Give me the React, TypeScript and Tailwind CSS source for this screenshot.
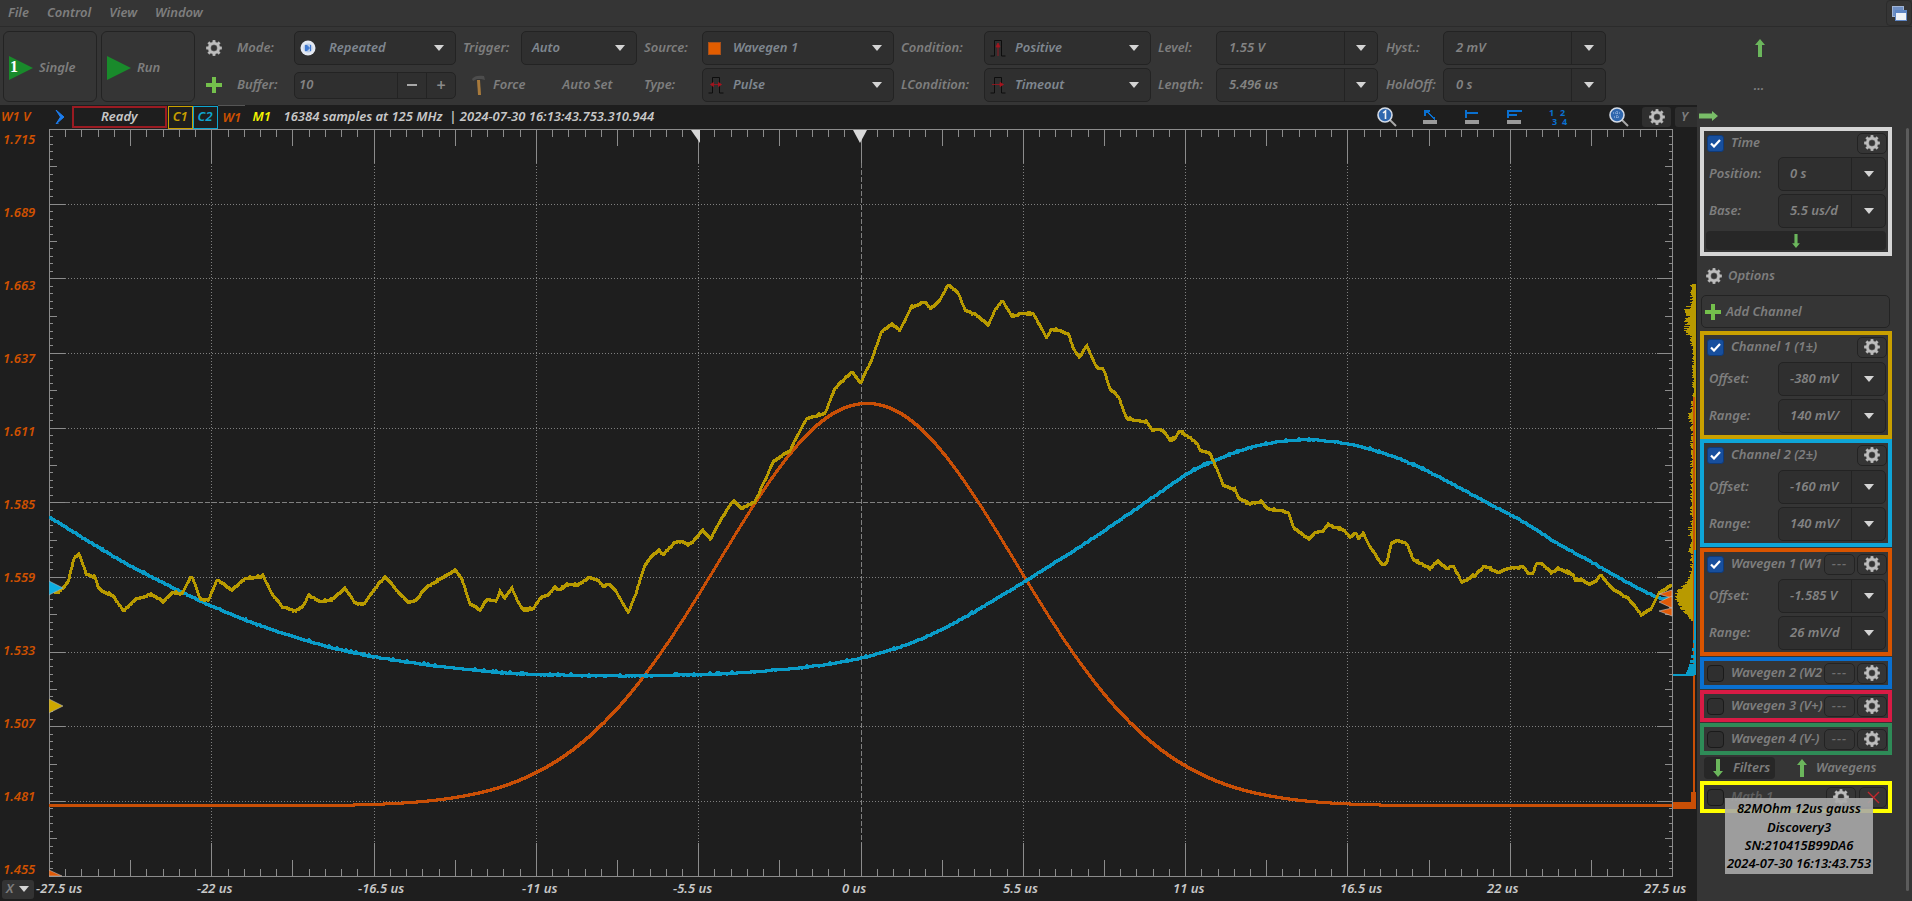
import React from "react";

const rnd = (i: number) => {
  const s = Math.sin(i * 12.9898) * 43758.5453;
  return s - Math.floor(s);
};

type Pt = [number, number];
const zoomed = (ox: number, oy: number, pts: number[][]): Pt[] =>
  pts.map(([x, y]) => [ox + x / 3, oy + y / 3] as Pt);

const yellowPts: Pt[] = [
  ...zoomed(0, 520, [[146, 210], [175, 218], [195, 198], [205, 185], [222, 115], [238, 103], [258, 160], [285, 172], [297, 207], [340, 228], [370, 272], [410, 235], [455, 222], [490, 245], [520, 215], [545, 222], [575, 167], [600, 235], [625, 240], [652, 178], [695, 210], [735, 175], [790, 168], [815, 220], [845, 258], [885, 272], [910, 258], [925, 225], [960, 243], [995, 238], [1035, 205], [1065, 248], [1090, 253], [1125, 205], [1155, 170], [1190, 210], [1225, 247], [1250, 240], [1275, 205], [1330, 170], [1365, 150], [1385, 175], [1410, 250], [1440, 270], [1460, 238], [1490, 240]]),
  ...zoomed(490, 440, [[30, 455], [45, 473], [65, 443], [80, 478], [100, 510], [130, 505], [155, 470], [180, 460], [195, 440], [205, 450], [235, 432], [265, 435], [298, 410], [325, 420], [340, 440], [355, 430], [375, 450], [395, 485], [415, 515], [435, 470], [450, 420], [465, 375], [485, 348], [505, 330], [520, 343], [540, 322], [558, 305], [575, 303], [595, 315], [615, 298], [638, 270], [662, 298], [680, 260], [700, 228], [720, 195]]),
  ...zoomed(700, 260, [[100, 722], [125, 745], [165, 725], [200, 650], [220, 605], [270, 570], [320, 475], [375, 460], [405, 385], [455, 335], [482, 368], [515, 300], [545, 215], [575, 192], [600, 210], [635, 140], [675, 125], [692, 145], [720, 120], [745, 72], [775, 100], [795, 150], [830, 165], [865, 195], [885, 150], [907, 122], [935, 168], [965, 160], [1000, 160], [1040, 235], [1055, 205], [1105, 220], [1120, 265], [1138, 292], [1160, 257], [1190, 322], [1210, 325], [1230, 385], [1255, 410], [1280, 475], [1340, 485], [1355, 508], [1385, 508], [1410, 538], [1425, 535], [1440, 512], [1490, 548]]),
  ...zoomed(1190, 400, [[30, 150], [60, 160], [75, 195], [100, 255], [135, 270], [145, 293], [175, 310], [215, 305], [230, 325], [295, 335], [310, 382], [358, 418], [375, 397], [400, 392], [415, 373], [465, 392], [480, 412], [497, 398], [505, 415], [520, 400], [540, 440], [575, 492], [590, 490], [605, 425], [625, 420], [650, 430], [670, 478], [720, 505], [742, 483], [770, 505], [788, 495], [815, 545], [855, 525], [885, 498], [925, 518], [950, 505], [1000, 500], [1015, 520], [1030, 518], [1040, 490], [1055, 490], [1085, 518], [1105, 505], [1150, 523], [1155, 540], [1175, 538], [1195, 552], [1215, 545], [1232, 525], [1270, 568], [1315, 595], [1355, 645], [1385, 625], [1405, 582], [1447, 552]]),
];

const bluePts: Pt[] = [
  [49, 517], [100, 548], [133, 567], [210, 605], [283, 633], [372, 656], [500, 672], [580, 675], [660, 675], [760, 671], [860, 658], [940, 630], [1062, 558], [1130, 513], [1190, 472],
  ...zoomed(1190, 400, [[60, 187], [150, 152], [240, 128], [350, 118], [470, 130], [600, 165], [700, 207], [800, 258], [900, 312], [1000, 365], [1100, 428], [1200, 483], [1300, 540], [1400, 590], [1447, 596]]),
];

function linear(pts: Pt[], x: number) {
  let i = 0;
  while (i < pts.length - 2 && pts[i + 1][0] < x) i++;
  const [a, b] = [pts[i], pts[i + 1]];
  return a[1] + ((x - a[0]) / (b[0] - a[0])) * (b[1] - a[1]);
}

function spline(pts: Pt[], x: number) {
  let i = 0;
  while (i < pts.length - 2 && pts[i + 1][0] < x) i++;
  const p0 = pts[Math.max(i - 1, 0)];
  const p1 = pts[i];
  const p2 = pts[i + 1];
  const p3 = pts[Math.min(i + 2, pts.length - 1)];
  const t = (x - p1[0]) / (p2[0] - p1[0]);
  const m1 = ((p2[1] - p0[1]) / (p2[0] - p0[0])) * (p2[0] - p1[0]);
  const m2 = ((p3[1] - p1[1]) / (p3[0] - p1[0])) * (p2[0] - p1[0]);
  const t2 = t * t;
  const t3 = t2 * t;
  return (2 * t3 - 3 * t2 + 1) * p1[1] + (t3 - 2 * t2 + t) * m1 + (-2 * t3 + 3 * t2) * p2[1] + (t3 - t2) * m2;
}

function trace(f: (x: number) => number, noise: number, seed: number) {
  const out: string[] = [];
  for (let x = 49; x <= 1672; x++) {
    const y = f(x) + (rnd(x + seed) - 0.5) * noise;
    out.push(`${x},${Math.round(y)}`);
  }
  return out.join(" ");
}

const yellowLine = trace((x) => linear(yellowPts, x), 1.2, 3);
const blueLine = trace((x) => spline(bluePts, x), 1, 7);
const orangeLine = trace((x) => 805.5 - 402.5 * Math.exp(-((x - 867) * (x - 867)) / (2 * 148 * 148)), 0, 1);

const STEP_X = 162.3;
const STEP_Y = 74.65;
const XS = Array.from({ length: 101 }, (_, i) => i);
const YS = Array.from({ length: 101 }, (_, i) => i);

function histWidth(y: number) {
  if (y < 284 || y > 620) return 0;
  let w = 3 + rnd(y) * 3;
  if (y > 305 && y < 335) w += rnd(y + 9) * 7;
  if (Math.abs(y - 314) < 2) w = 10;
  if (y > 345 && y < 400) w = 2 + rnd(y + 3) * 2;
  if (y > 412 && y < 422) w += rnd(y + 5) * 5;
  if (y > 525 && y < 552) w += rnd(y + 2) * 3;
  if (y > 565) w += 18 * Math.exp(-((y - 598) * (y - 598)) / 250) * (0.65 + rnd(y + 4) * 0.35);
  return w;
}
const HIST = Array.from({ length: 340 }, (_, i) => 284 + i);

function Plot() {
  const tick = "#8c8c8c";
  return (
    <svg width={1648} height={748} viewBox="49 129 1648 748" shapeRendering="crispEdges" className="block">
      {/* x ruler */}
      <path d="M49 129.5H1672M49 876.5H1672M49.5 129V877M1672.5 129V877" stroke={tick} fill="none" />
      {XS.map((i) => {
        const x = Math.round(49 + i * (STEP_X / 10));
        const len = i % 10 === 0 ? 33 : i % 5 === 0 ? 16 : 7;
        return <path key={i} d={`M${x}.5 130V${130 + len}M${x}.5 876V${876 - len}`} stroke={tick} />;
      })}
      {/* y ruler */}
      {YS.map((i) => {
        const y = Math.round(129 + i * (STEP_Y / 10));
        const len = i % 10 === 0 ? 15 : i % 5 === 0 ? 7 : 3;
        return <path key={i} d={`M50 ${y}.5H${50 + len}M1672 ${y}.5H${1672 - len}`} stroke={tick} />;
      })}
      {/* grid */}
      {Array.from({ length: 9 }, (_, i) => i + 1).map((i) => {
        const y = Math.round(129 + i * STEP_Y);
        const mid = i === 5;
        return <path key={i} d={`M65 ${y}.5H1657`} stroke="#808080" strokeDasharray={mid ? "5 2" : "1 2"} />;
      })}
      {Array.from({ length: 9 }, (_, i) => i + 1).map((i) => {
        const x = Math.round(49 + i * STEP_X);
        const mid = i === 5;
        return <path key={i} d={`M${x}.5 163V843`} stroke="#808080" strokeDasharray={mid ? "5 2" : "1 2"} />;
      })}
      {/* histogram */}
      {HIST.map((y) => (
        <rect key={y} x={1696 - histWidth(y)} y={y} width={histWidth(y)} height={1} fill="#b89a00" />
      ))}
      <rect x={1693} y={397} width={2} height={408} fill="#c94f06" />
      <rect x={1694} y={550} width={2} height={125} fill="#0a9cc8" />
      {[640, 648, 655, 660, 664, 667, 670, 672].map((y, i) => (
        <rect key={y} x={1693 - i} y={y} width={3 + i} height={3} fill="#0a9cc8" />
      ))}
      <rect x={1673} y={674} width={21} height={2} fill="#0a9cc8" />
      <rect x={1691} y={792} width={5} height={10} fill="#c94f06" />
      <rect x={1673} y={802} width={23} height={7} fill="#c94f06" />
      {/* traces */}
      <polyline points={orangeLine} fill="none" stroke="#c94f06" strokeWidth={3} />
      <polyline points={blueLine} fill="none" stroke="#0a9cc8" strokeWidth={3} />
      <polyline points={yellowLine} fill="none" stroke="#b89a00" strokeWidth={3} />
      {/* markers */}
      <g shapeRendering="auto">
        <path d="M49 581L63 588L49 595Z" fill="#0eaee0" stroke="#b8b8b8" strokeWidth={0.6} />
        <path d="M49 699L63 706L49 713Z" fill="#cda800" stroke="#b8b8b8" strokeWidth={0.6} />
        <path d="M49 870L62 876H49Z" fill="#e05a08" stroke="#b8b8b8" strokeWidth={0.6} />
        <path d="M1672 590L1659 594L1672 598Z" fill="#e05a08" stroke="#c8c8c8" strokeWidth={0.6} />
        <path d="M1672 596L1659 602L1672 608Z" fill="#e05a08" stroke="#c8c8c8" strokeWidth={0.6} />
        <path d="M1672 608L1659 611L1672 616Z" fill="#e05a08" stroke="#c8c8c8" strokeWidth={0.6} />
        <path d="M853 130H867L860 143Z" fill="#d8d8d8" />
        <path d="M691 130H700V143Z" fill="#d8d8d8" />
      </g>
    </svg>
  );
}

function cog(size: number, n = 8) {
  const c = size / 2;
  const R = size / 2;
  const r = size * 0.38;
  const pts: string[] = [];
  for (let i = 0; i < n; i++) {
    const a = (i / n) * Math.PI * 2;
    const w = Math.PI / n;
    const at = (rad: number, ang: number) => `${(c + rad * Math.cos(ang)).toFixed(2)} ${(c + rad * Math.sin(ang)).toFixed(2)}`;
    pts.push(at(r, a - w * 0.62), at(R, a - w * 0.36), at(R, a + w * 0.36), at(r, a + w * 0.62));
  }
  const h = size * 0.2;
  return `M${pts.join("L")}Z M${c - h} ${c}a${h} ${h} 0 1 0 ${h * 2} 0a${h} ${h} 0 1 0 ${-h * 2} 0Z`;
}

function Gear({ size = 16 }: { size?: number }) {
  return (
    <svg width={size} height={size} viewBox={`0 0 ${size} ${size}`} className="shrink-0">
      <path d={cog(size)} fill="#bdbdbd" fillRule="evenodd" stroke="#8f8f8f" strokeWidth={0.4} />
    </svg>
  );
}

function Caret() {
  return (
    <svg width={10} height={6} viewBox="0 0 10 6" className="shrink-0">
      <path d="M0 0H10L5 6Z" fill="#d4d4d4" />
    </svg>
  );
}

function Play({ children }: { children?: React.ReactNode }) {
  return (
    <div className="relative w-[24px] h-[24px] shrink-0">
      <svg width={24} height={24} viewBox="0 0 24 24">
        <path d="M0 0L24 12L0 24Z" fill="#198a2b" />
      </svg>
      {children}
    </div>
  );
}

function Plus() {
  return (
    <svg width={16} height={16} viewBox="0 0 16 16" className="shrink-0">
      <path d="M6 0H10V6H16V10H10V16H6V10H0V6H6Z" fill="#74c04c" />
    </svg>
  );
}

function ArrowV({ down = false, h = 18 }: { down?: boolean; h?: number }) {
  return (
    <svg width={10} height={h} viewBox="0 0 10 18" className="shrink-0">
      <path d={down ? "M3 0H7V12H10L5 18L0 12H3Z" : "M3 18H7V6H10L5 0L0 6H3Z"} fill="#6bb65c" />
    </svg>
  );
}

function PulseIcon({ kind }: { kind: "up" | "both" | "right" }) {
  return (
    <svg width={16} height={18} viewBox="0 0 16 18" className="shrink-0">
      <path d="M0.5 17H4.5V1.5H11.5V17H15.5" fill="none" stroke="#0d0d0d" strokeWidth={1} />
      {kind === "up" && <path d="M8 17V7M6 8L8 4L10 8Z" stroke="#a5141e" fill="#a5141e" strokeWidth={0.8} />}
      {kind === "both" && <path d="M3 8.5H13M5.5 6.5V10.5L2.5 8.5ZM10.5 6.5V10.5L13.5 8.5Z" stroke="#a5141e" fill="#a5141e" strokeWidth={0.8} />}
      {kind === "right" && <path d="M2 8.5H13M10 6.5V10.5L13.5 8.5Z" stroke="#a5141e" fill="#a5141e" strokeWidth={0.8} />}
    </svg>
  );
}

function ModeIcon() {
  return (
    <svg width={16} height={16} viewBox="0 0 16 16" className="shrink-0">
      <circle cx={8} cy={8} r={7.5} fill="#e4e9f2" />
      <circle cx={8} cy={8} r={4.6} fill="#b6cbe9" />
      <path d="M5.5 5V11M6.5 5L9.5 8L6.5 11ZM10.5 5V11" stroke="#3f78cf" fill="#3f78cf" strokeWidth={1} />
    </svg>
  );
}

function Hammer() {
  return (
    <svg width={14} height={20} viewBox="0 0 14 20" className="shrink-0">
      <path d="M5 5H8L9 20H6Z" fill="#a87a3c" />
      <path d="M0 4C2 1 6 0 12 1L13 5L9 4H5L1 6Z" fill="#4d4d4d" />
    </svg>
  );
}

function Magnifier({ dotted }: { dotted?: boolean }) {
  return (
    <svg width={20} height={20} viewBox="0 0 20 20" className="shrink-0">
      <path d="M12 12L19 19" stroke="#a9a9a9" strokeWidth={2} />
      <circle cx={8} cy={8} r={7} fill="#2f67ae" stroke="#d4dbe6" strokeWidth={1.6} />
      {dotted ? (
        <path d="M4 6H12M8 4V12M5 10H11" stroke="#a9c4e8" strokeWidth={1} strokeDasharray="1 1" />
      ) : (
        <path d="M6 6L8.5 4V12" fill="none" stroke="#f2f2f2" strokeWidth={1.6} />
      )}
    </svg>
  );
}

function CursorIcon({ d }: { d: string }) {
  return (
    <svg width={16} height={16} viewBox="0 0 16 16" className="shrink-0" shapeRendering="crispEdges">
      <path d={d} stroke="#0a70d0" strokeWidth={1.6} fill="none" />
      <rect x={1} y={11} width={14} height={4} fill="#9a9a9a" />
    </svg>
  );
}

function Check({ on = true }: { on?: boolean }) {
  if (!on) return <div className="w-[17px] h-[17px] rounded-[4px] border border-[#1a1a1a] bg-[#2f2f2f] shrink-0" />;
  return (
    <div className="w-[17px] h-[17px] rounded-[3px] bg-[#174f9e] border border-[#0f3a78] flex items-center justify-center shrink-0">
      <svg width={11} height={9} viewBox="0 0 11 9">
        <path d="M1 4.5L4 7.5L10 1" fill="none" stroke="#ffffff" strokeWidth={2.2} />
      </svg>
    </div>
  );
}

function Combo({ w, icon, text, textPl = "pl-[11px]", h = "h-[34px]" }: { w: string; icon?: React.ReactNode; text: string; textPl?: string; h?: string }) {
  return (
    <div className={`${w} ${h} shrink-0 rounded-[5px] border border-[#232323] bg-[#2f2f2f] flex items-center pr-[11px] pl-[5px]`}>
      {icon}
      <span className={`${textPl} flex-1 text-[#7f8790] truncate`}>{text}</span>
      <Caret />
    </div>
  );
}

function SpinCombo({ w, text, pl = "pl-[12px]", cap = "w-[33px]" }: { w: string; text: string; pl?: string; cap?: string }) {
  return (
    <div className={`${w} h-[34px] shrink-0 rounded-[5px] border border-[#232323] bg-[#2f2f2f] flex items-center`}>
      <span className={`${pl} flex-1 text-[#838383] overflow-hidden whitespace-nowrap`}>{text}</span>
      <div className={`${cap} h-full border-l border-[#232323] flex items-center justify-center shrink-0`}>
        <Caret />
      </div>
    </div>
  );
}

function Row({ children }: { children: React.ReactNode }) {
  return <div className="h-[34px] flex items-center">{children}</div>;
}

function Label({ w, text }: { w: string; text: string }) {
  return <span className={`${w} shrink-0 text-[#7e7e7e]`}>{text}</span>;
}

function Toolbar() {
  return (
    <div className="h-[78px] flex pt-[4px] pl-[3px]">
      <button className="w-[94px] h-[71px] rounded-[6px] border border-[#232323] flex items-center pt-[3px] pl-[5px] gap-[6px] text-[#7e7e7e] italic">
        <Play>
          <span className="absolute left-[1px] top-[1px] text-[16px] leading-[20px] font-bold not-italic text-white font-['Liberation_Serif',serif]">1</span>
        </Play>
        Single
      </button>
      <button className="w-[94px] h-[71px] ml-[4px] rounded-[6px] border border-[#232323] flex items-center pt-[3px] pl-[5px] gap-[6px] text-[#7e7e7e] italic">
        <Play />
        Run
      </button>

      <div className="w-[42px] flex flex-col pl-[11px]">
        <Row><Gear /></Row>
        <div className="h-[3px]" />
        <Row><Plus /></Row>
      </div>

      <div className="w-[226px] flex flex-col gap-[3px]">
        <Row>
          <Label w="w-[57px]" text="Mode:" />
          <Combo w="w-[162px]" icon={<ModeIcon />} text="Repeated" textPl="pl-[13px]" />
        </Row>
        <Row>
          <Label w="w-[57px]" text="Buffer:" />
          <div className="w-[162px] h-[27px] rounded-[5px] border border-[#232323] bg-[#2f2f2f] flex items-center">
            <span className="pl-[4px] flex-1 text-[#838383]">10</span>
            <div className="w-[29px] h-full border-l border-[#232323] flex items-center justify-center">
              <span className="w-[10px] h-[2px] bg-[#a8a8a8]" />
            </div>
            <div className="w-[29px] h-full border-l border-[#232323] flex items-center justify-center text-[#8a8a8a] text-[16px] not-italic">+</div>
          </div>
        </Row>
      </div>

      <div className="w-[181px] flex flex-col gap-[3px]">
        <Row>
          <Label w="w-[58px]" text="Trigger:" />
          <Combo w="w-[116px]" text="Auto" textPl="pl-[5px]" />
        </Row>
        <Row>
          <div className="w-[30px] flex justify-center pl-[2px]"><Hammer /></div>
          <span className="text-[#7e7e7e]">Force</span>
          <span className="ml-[37px] text-[#7e7e7e]">Auto Set</span>
        </Row>
      </div>

      <div className="w-[257px] flex flex-col gap-[3px]">
        <Row>
          <Label w="w-[58px]" text="Source:" />
          <Combo
            w="w-[192px]"
            icon={<span className="w-[13px] h-[13px] bg-[#e25d00] border border-[#a8501a] shrink-0" />}
            text="Wavegen 1"
            textPl="pl-[12px]"
          />
        </Row>
        <Row>
          <Label w="w-[58px]" text="Type:" />
          <Combo w="w-[192px]" icon={<PulseIcon kind="both" />} text="Pulse" textPl="pl-[9px]" />
        </Row>
      </div>

      <div className="w-[257px] flex flex-col gap-[3px]">
        <Row>
          <Label w="w-[83px]" text="Condition:" />
          <Combo w="w-[167px]" icon={<PulseIcon kind="up" />} text="Positive" textPl="pl-[9px]" />
        </Row>
        <Row>
          <Label w="w-[83px]" text="LCondition:" />
          <Combo w="w-[167px]" icon={<PulseIcon kind="right" />} text="Timeout" textPl="pl-[9px]" />
        </Row>
      </div>

      <div className="w-[228px] flex flex-col gap-[3px]">
        <Row>
          <Label w="w-[58px]" text="Level:" />
          <SpinCombo w="w-[162px]" text="1.55 V" cap="w-[33px]" />
        </Row>
        <Row>
          <Label w="w-[58px]" text="Length:" />
          <SpinCombo w="w-[162px]" text="5.496 us" cap="w-[33px]" />
        </Row>
      </div>

      <div className="w-[220px] flex flex-col gap-[3px]">
        <Row>
          <Label w="w-[57px]" text="Hyst.:" />
          <SpinCombo w="w-[163px]" text="2 mV" cap="w-[34px]" />
        </Row>
        <Row>
          <Label w="w-[57px]" text="HoldOff:" />
          <SpinCombo w="w-[163px]" text="0 s" cap="w-[34px]" />
        </Row>
      </div>

      <div className="w-[306px] flex flex-col items-center">
        <div className="h-[34px] flex items-center pl-[2px]"><ArrowV /></div>
        <div className="mt-[11px] text-[#7e7e7e]">...</div>
      </div>
    </div>
  );
}

function ReadoutBar() {
  return (
    <div className="h-[24px] flex items-center bg-[#1e1e1e] shrink-0">
      <span className="w-[55px] pl-[1px] text-[#cf5100]">W1 V</span>
      <svg width={10} height={14} viewBox="0 0 10 14" className="shrink-0">
        <path d="M1 0L9 7L1 14H3.5L1 14L5.5 7L1 0Z" fill="#1c7ef0" stroke="#1c7ef0" />
      </svg>
      <div className="ml-[7px] w-[95px] h-[22px] border-2 border-[#9a1b22] flex items-center justify-center text-[#c8c8c8]">Ready</div>
      <div className="ml-[1px] w-[25px] h-[23px] border border-[#c9a000] flex items-center justify-center text-[#c9a000]">C1</div>
      <div className="w-[25px] h-[23px] border border-[#0ea5d0] flex items-center justify-center text-[#0ea5d0]">C2</div>
      <div className="w-[27px] h-full border-t border-[#555555] pl-[5px] flex items-center text-[#cf5100]">W1</div>
      <span className="ml-[8px] w-[31px] text-[#f5f500]">M1</span>
      <span className="w-[1096px] text-[#c8c8c8] whitespace-pre">16384 samples at 125 MHz  | 2024-07-30 16:13:43.753.310.944</span>
      <Magnifier />
      <div className="ml-[25px]">
        <CursorIcon d="M13 10L4 2M3 7V2H8" />
      </div>
      <div className="ml-[26px]">
        <CursorIcon d="M2 1V9M2 4H14" />
      </div>
      <div className="ml-[26px]">
        <CursorIcon d="M2 1V9M2 2H16M2 6H11" />
      </div>
      <div className="ml-[25px] w-[22px] grid grid-cols-2 text-[9px] leading-[9px] font-bold not-italic text-[#0a70d0] shrink-0">
        <span className="pl-[2px]">1</span>
        <span className="pl-[2px]">2</span>
        <span className="pl-[5px]">3</span>
        <span className="pl-[4px]">4</span>
      </div>
      <div className="ml-[40px]"><Magnifier dotted /></div>
      <div className="ml-[13px] w-[29px] h-[20px] rounded-[3px] bg-[#2f2f2f] flex items-center justify-center"><Gear /></div>
      <div className="ml-[4px] w-[22px] h-[20px] rounded-l-[3px] bg-[#2f2f2f] flex items-center justify-center pr-[3px] text-[#7e7e7e]">Y</div>
    </div>
  );
}

const yLabels = ["1.715", "1.689", "1.663", "1.637", "1.611", "1.585", "1.559", "1.533", "1.507", "1.481", "1.455"];

function YAxis() {
  return (
    <div className="w-[49px] h-[748px] flex flex-col justify-between pl-[3px] pt-[2px] text-[#cf5100] leading-[16px]">
      {yLabels.map((t) => (
        <span key={t}>{t}</span>
      ))}
    </div>
  );
}

function XAxis() {
  return (
    <div className="h-[24px] flex items-center">
      <div className="ml-[2px] w-[32px] h-[19px] rounded-[3px] bg-[#333333] flex items-center pl-[4px] gap-[5px] text-[#7e7e7e] shrink-0">
        X
        <Caret />
      </div>
      <div className="ml-[2px] grid grid-cols-[161px_161px_164px_151px_169px_161px_170px_167px_147px_157px_60px] text-[#c8c8c8]">
        {["-27.5 us", "-22 us", "-16.5 us", "-11 us", "-5.5 us", "0 us", "5.5 us", "11 us", "16.5 us", "22 us", "27.5 us"].map((t) => (
          <span key={t} className="whitespace-nowrap">{t}</span>
        ))}
      </div>
    </div>
  );
}

function GearBtn() {
  return (
    <div className="w-[30px] h-[21px] rounded-[5px] border border-[#232323] flex items-center justify-center shrink-0">
      <Gear />
    </div>
  );
}

function DashBtn() {
  return (
    <div className="w-[31px] h-[21px] rounded-[5px] border border-[#232323] flex items-center justify-center shrink-0 text-[#6e6e6e] tracking-[1px]">
      ---
    </div>
  );
}

function CardHeader({ on, title, dash }: { on: boolean; title: string; dash?: boolean }) {
  return (
    <div className="flex items-center h-[24px] shrink-0">
      <div className="ml-[1px]"><Check on={on} /></div>
      <span className="ml-[7px] flex-1 whitespace-nowrap text-[#7e7e7e]">{title}</span>
      {dash && <div className="mr-[2px]"><DashBtn /></div>}
      <GearBtn />
    </div>
  );
}

function Field({ label, value }: { label: string; value: string }) {
  return (
    <div className="flex items-center h-[34px]">
      <span className="w-[72px] shrink-0 pl-[3px] text-[#7e7e7e]">{label}</span>
      <SpinCombo w="w-[108px]" text={value} cap="w-[34px]" pl="pl-[11px]" />
    </div>
  );
}

function Card({ border, children, h }: { border: string; children: React.ReactNode; h: string }) {
  return (
    <div className={`${border} ${h} w-[192px] border-4 flex flex-col pl-[2px] pr-[1px] shrink-0`}>
      {children}
    </div>
  );
}

function ChannelCard({ border, title, offset, range, dash }: { border: string; title: string; offset: string; range: string; dash?: boolean }) {
  return (
    <Card border={border} h="h-[108px]">
      <CardHeader on title={title} dash={dash} />
      <div className="flex flex-col gap-[3px] mt-[3px]">
        <Field label="Offset:" value={offset} />
        <Field label="Range:" value={range} />
      </div>
    </Card>
  );
}

function Panel() {
  return (
    <div className="flex-1 relative flex pl-[3px]">
      <div className="flex flex-col w-[192px]">
        <div className="h-[22px] flex items-center">
          <svg width={19} height={10} viewBox="0 0 19 10" className="-ml-[1px]">
            <path d="M0 2.5H13V0L19 5L13 10V7.5H0Z" fill="#79bd68" />
          </svg>
        </div>
        <Card border="border-[#d6d6d6]" h="h-[129px]">
          <CardHeader on title="Time" />
          <div className="flex flex-col gap-[3px] mt-[2px]">
            <Field label="Position:" value="0 s" />
            <Field label="Base:" value="5.5 us/d" />
          </div>
          <div className="mt-[3px] mr-[1px] h-[19px] rounded-[4px] bg-[#272727] flex items-center justify-center">
            <ArrowV down h={14} />
          </div>
        </Card>
        <div className="h-[39px] flex items-center pl-[6px] gap-[6px] text-[#7e7e7e]">
          <Gear />
          Options
        </div>
        <div className="ml-[1px] w-[189px] h-[33px] rounded-[5px] border border-[#232323] flex items-center pl-[3px] gap-[5px] text-[#7e7e7e]">
          <Plus />
          Add Channel
        </div>
        <div className="mt-[3px] flex flex-col">
          <ChannelCard border="border-[#c9a000]" title="Channel 1 (1±)" offset="-380 mV" range="140 mV/" />
          <ChannelCard border="border-[#0ea5d8]" title="Channel 2 (2±)" offset="-160 mV" range="140 mV/" />
          <div className="h-[1px]" />
          <ChannelCard border="border-[#d95400]" title="Wavegen 1 (W1" offset="-1.585 V" range="26 mV/d" dash />
          <div className="h-[1px]" />
          <Card border="border-[#0a70d0]" h="h-[32px]"><CardHeader on={false} title="Wavegen 2 (W2" dash /></Card>
          <div className="h-[1px]" />
          <Card border="border-[#d81b45]" h="h-[32px]"><CardHeader on={false} title="Wavegen 3 (V+)" dash /></Card>
          <div className="h-[1px]" />
          <Card border="border-[#2e8b57]" h="h-[32px]"><CardHeader on={false} title="Wavegen 4 (V-)" dash /></Card>
        </div>
        <div className="h-[26px] flex items-center pl-[4px] text-[#7e7e7e]">
          <div className="w-[71px] h-[22px] rounded-[4px] bg-[#272727] flex items-center pl-[9px] gap-[10px]">
            <ArrowV down />
            Filters
          </div>
          <div className="ml-[22px]"><ArrowV /></div>
          <span className="ml-[9px]">Wavegens</span>
        </div>
        <Card border="border-[#ffff00]" h="h-[32px]">
          <div className="flex items-center h-[24px] shrink-0">
            <div className="ml-[1px]"><Check on={false} /></div>
            <span className="ml-[7px] flex-1 text-[#5e5e5e]">Math 1</span>
            <div className="mr-[3px]"><GearBtn /></div>
            <div className="w-[28px] h-[21px] rounded-[5px] border border-[#232323] flex items-center justify-center">
              <svg width={13} height={13} viewBox="0 0 13 13">
                <path d="M1 1L12 12M12 1L1 12" stroke="#c1272d" strokeWidth={1.4} />
              </svg>
            </div>
          </div>
        </Card>
      </div>
      <div className="ml-[14px] mt-[23px] mb-[10px] w-[3px] rounded-full bg-[#5c5c5c]" />
      <div className="absolute left-[28px] top-[693px] w-[148px] h-[76px] bg-[#a8a8a8]/90 flex flex-col items-center justify-center text-black leading-[18.3px] whitespace-nowrap">
        <span>82MOhm 12us gauss</span>
        <span>Discovery3</span>
        <span>SN:210415B99DA6</span>
        <span>2024-07-30 16:13:43.753</span>
      </div>
    </div>
  );
}

export default function App() {
  return (
    <div className="w-[1912px] h-[901px] overflow-hidden flex flex-col bg-[#353535] font-['Noto_Sans',sans-serif] text-[13px] font-semibold italic">
      <div className="h-[27px] flex items-center border-b border-[#2b2b2b] shrink-0 relative">
        <div className="flex gap-[18px] pl-[8px] text-[#7e7e7e]">
          <span>File</span>
          <span>Control</span>
          <span>View</span>
          <span>Window</span>
        </div>
        <div className="ml-auto mr-0 w-[26px] h-[26px] rounded-[4px] border border-[#2b2b2b] flex items-center justify-center">
          <svg width={15} height={15} viewBox="0 0 15 15">
            <rect x={0.5} y={0.5} width={11} height={10} fill="#6f8fc4" stroke="#9fb4d6" />
            <rect x={3.5} y={4.5} width={11} height={10} fill="#eef2f8" stroke="#5f86c4" />
            <rect x={3.5} y={4.5} width={11} height={2.5} fill="#5f86c4" />
          </svg>
        </div>
      </div>
      <Toolbar />
      <div className="flex flex-1 min-h-0">
        <div className="w-[1697px] flex flex-col bg-[#1e1e1e] shrink-0">
          <ReadoutBar />
          <div className="flex">
            <YAxis />
            <Plot />
          </div>
          <XAxis />
        </div>
        <Panel />
      </div>
    </div>
  );
}
